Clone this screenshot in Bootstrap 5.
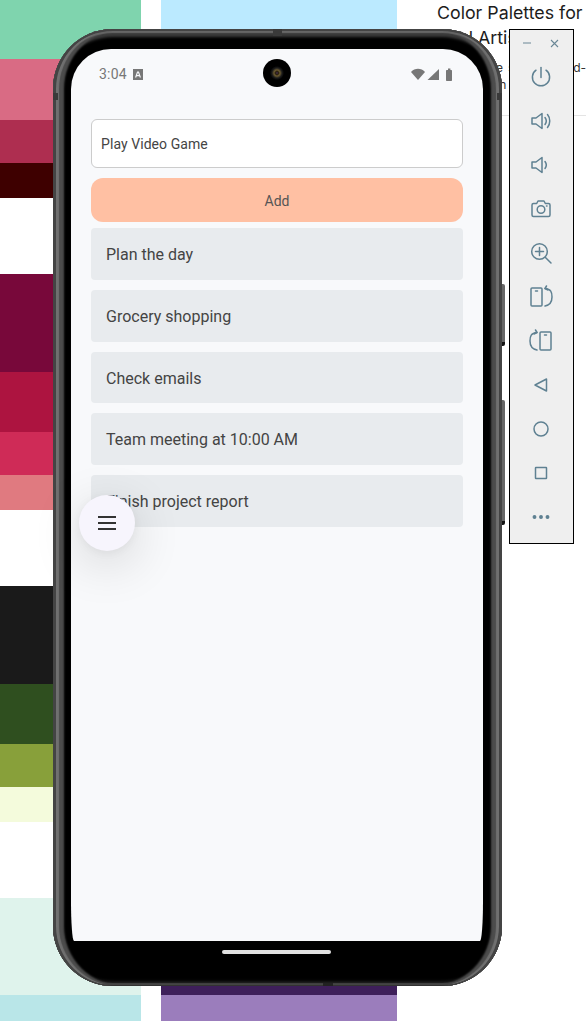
<!DOCTYPE html>
<html lang="en">
<head>
    <meta charset="UTF-8" />
    <meta name="viewport" content="width=device-width, initial-scale=1.0" />
    <title>Emulator - Todo list</title>
    <link href="https://cdn.jsdelivr.net/npm/bootstrap@5.3.3/dist/css/bootstrap.min.css" rel="stylesheet" />
    <style>
        body {
            width: 586px;
            height: 1021px;
            overflow: hidden;
            background-color: #fff;
            font-family: 'Roboto', sans-serif;
            position: relative;
        }

        /* page behind the emulator */
        .backdrop {
            height: 1021px;
        }

        .swatch-col-a {
            width: 141px;
            margin-right: 20px;
        }

        .swatch-col-b {
            width: 236px;
            margin-right: 40px;
        }

        .sw {
            height: var(--h);
            background-color: var(--c);
        }

        .article-col {
            width: 149px;
            font-family: 'Inter', sans-serif;
            color: #1c1c1c;
            overflow: hidden;
        }

        .article-title {
            font-size: 17.8px;
            line-height: 25px;
            font-weight: 400;
            white-space: nowrap;
            margin: 0;
        }

        .article-text {
            font-size: 12px;
            line-height: 17px;
            word-spacing: 2px;
            white-space: nowrap;
            margin: 9px 0 0 0;
            color: #333;
        }

        .article-rule {
            border-top: 1px solid #e4e4e4;
            margin-top: 22px;
        }

        /* phone frame */
        .phone-shell {
            position: absolute;
            left: 53px;
            top: 29px;
            width: 449px;
            height: 957px;
            padding: 20px 19px 0 18px;
            background-color: #000;
            border-radius: 60px;
            box-shadow:
                inset 3px 0 0 #444, inset -3px 0 0 #444, inset 0 2px 0 #444, inset 0 -1px 0 #333,
                inset 6px 0 1px #707070, inset -6px 0 1px #707070, inset 0 4px 1px #666, inset 0 -3px 1px #444,
                inset 11px 0 2px #4c4c4c, inset -11px 0 2px #4c4c4c, inset 0 8px 3px #3c3c3c, inset 0 -5px 3px #1c1c1c;
        }

        .frame-tick {
            position: absolute;
            background-color: #3a3a3a;
        }

        .tick-top {
            left: 220px;
            top: 0;
            width: 9px;
            height: 7px;
        }

        .tick-bottom {
            left: 270px;
            bottom: 0;
            width: 10px;
            height: 3px;
            background-color: #222;
        }

        .tick-left {
            left: 0;
            top: 64px;
            width: 5px;
            height: 7px;
        }

        .tick-right {
            right: 0;
            top: 64px;
            width: 5px;
            height: 7px;
        }

        .side-key {
            position: absolute;
            left: 449px;
            width: 3px;
            background-color: #666;
            border-bottom: 4px solid #111;
            border-radius: 0 2px 2px 0;
        }

        .key-power {
            top: 255px;
            height: 62px;
        }

        .key-volume {
            top: 371px;
            height: 125px;
        }

        .screen {
            position: relative;
            height: 892px;
            background-color: #f8f9fb;
            border-radius: 40px 40px 3px 3px / 40px 40px 40px 40px;
            color: #444;
        }

        .status-row {
            height: 70px;
            padding: 15px 29px 0 28px;
            color: #777;
            font-size: 14px;
        }

        .status-time {
            line-height: 20px;
            letter-spacing: .2px;
        }

        .badge-a {
            width: 10px;
            height: 11px;
            margin-left: 6px;
            fill: #777;
        }

        .camera-hole {
            position: absolute;
            left: 192px;
            top: 10px;
            width: 28px;
            height: 28px;
            border-radius: 50%;
            background: radial-gradient(circle at 50% 50%, #4a2f55 0, #2a2010 1.5px, #6b5a30 3px, #1c1c1c 5px, #000 7px);
        }

        .app-body {
            padding: 0 20px;
        }

        .task-input.form-control {
            height: 49px;
            font-size: 14px;
            letter-spacing: .07px;
            color: #444;
            padding: 0 9px;
            border-color: #ccc;
            border-radius: 6px;
            background-color: #fff;
        }

        .add-btn.btn {
            height: 44px;
            margin-top: 10px;
            width: 100%;
            padding-top: 8px;
            padding-bottom: 6px;
            font-size: 14px;
            color: #555;
            background-color: #ffc0a3;
            border: none;
            border-radius: 12px;
        }

        .task-list {
            margin-top: 6px;
            gap: 10px;
        }

        .task-row {
            height: 51.8px;
            line-height: 53.8px;
            padding-left: 15px;
            font-size: 16px;
            color: #444;
            background-color: #e8ebee;
            border-radius: 4px;
        }

        .fab {
            position: absolute;
            left: 8px;
            top: 446px;
            width: 56px;
            height: 56px;
            border-radius: 50%;
            background-color: #f7f5fd;
            box-shadow: 0 12px 50px rgba(0, 0, 0, .16), 0 2px 10px rgba(0, 0, 0, .05);
        }

        .home-strip {
            height: 45px;
            padding-top: 9px;
        }

        .home-bar {
            width: 109px;
            height: 4px;
            margin-left: 151px;
            background-color: #e2e2e2;
            border-radius: 2px;
        }

        /* emulator side toolbar */
        .tool-panel {
            position: absolute;
            left: 509px;
            top: 29px;
            width: 65px;
            height: 515px;
            background-color: #efefef;
            border: 1px solid #000;
        }

        .tool-head {
            height: 26px;
            padding: 0 14px 0 13px;
        }

        .tool-stack {
            gap: 16px;
            padding-top: 7px;
            padding-right: 1px;
        }

        .tool-icon {
            width: 28px;
            height: 28px;
            fill: none;
            stroke: #5f8192;
            stroke-width: 1.5;
            stroke-linecap: round;
            stroke-linejoin: round;
        }
    </style>
</head>
<body>

<div class="backdrop d-flex">
    <div class="swatch-col-a d-flex flex-column">
        <div class="sw" style="--h:59px;--c:#7fd4ae"></div>
        <div class="sw" style="--h:61px;--c:#d96b84"></div>
        <div class="sw" style="--h:43px;--c:#ae2e50"></div>
        <div class="sw" style="--h:35px;--c:#3e0000"></div>
        <div class="sw" style="--h:76px;--c:#fff"></div>
        <div class="sw" style="--h:98px;--c:#78083a"></div>
        <div class="sw" style="--h:60px;--c:#ad1440"></div>
        <div class="sw" style="--h:43px;--c:#cf2b57"></div>
        <div class="sw" style="--h:35px;--c:#e07a80"></div>
        <div class="sw" style="--h:76px;--c:#fff"></div>
        <div class="sw" style="--h:98px;--c:#1a1a1a"></div>
        <div class="sw" style="--h:60px;--c:#2f4f1f"></div>
        <div class="sw" style="--h:43px;--c:#88a03a"></div>
        <div class="sw" style="--h:35px;--c:#f4fbdc"></div>
        <div class="sw" style="--h:76px;--c:#fff"></div>
        <div class="sw" style="--h:97px;--c:#dff3ec"></div>
        <div class="sw" style="--h:26px;--c:#b9e6e8"></div>
    </div>
    <div class="swatch-col-b d-flex flex-column">
        <div class="sw" style="--h:100px;--c:#bbeaff"></div>
        <div class="sw" style="--h:885px;--c:#fff"></div>
        <div class="sw" style="--h:10px;--c:#3e1f5a"></div>
        <div class="sw" style="--h:26px;--c:#9b7dbc"></div>
    </div>
    <div class="article-col">
        <h1 class="article-title">Color Palettes for<br>Real Artists</h1>
        <p class="article-text">Explore the sweet brand-<br>swatches in</p>
        <div class="article-rule"></div>
    </div>
</div>

<div class="phone-shell">
    <div class="frame-tick tick-top"></div>
    <div class="frame-tick tick-bottom"></div>
    <div class="frame-tick tick-left"></div>
    <div class="frame-tick tick-right"></div>
    <div class="side-key key-power"></div>
    <div class="side-key key-volume"></div>

    <div class="screen">
        <div class="status-row d-flex align-items-start justify-content-between">
            <div class="d-flex align-items-center">
                <span class="status-time">3:04</span>
                <svg class="badge-a" viewBox="0 0 10 11"><path fill-rule="evenodd" d="M0 0h10v11H0zM4.100 2.500 2 8.500h1.300l.4-1.300h2.600l.4 1.300H8L5.900 2.500zM4.100 6 5 3.600 5.900 6z"/></svg>
            </div>
            <svg width="43" height="13" viewBox="0 0 43 13" class="mt-1" fill="#777">
                <path d="M0 4C3.800-.2 10.200-.2 14 4L7 12z"/>
                <path d="M16.500 12 28 1v11z"/>
                <path d="M35 2.700c0-.4.300-.7.700-.7h1.300V.4h2.400V2h.9c.4 0 .7.300.7.700v9.600c0 .4-.3.700-.7.700h-4.600c-.4 0-.7-.3-.7-.7z"/>
            </svg>
        </div>
        <div class="camera-hole"></div>

        <div class="app-body">
            <input class="task-input form-control" type="text" value="Play Video Game" />
            <button type="button" class="add-btn btn">Add</button>
            <div class="task-list d-flex flex-column">
                <div class="task-row">Plan the day</div>
                <div class="task-row">Grocery shopping</div>
                <div class="task-row">Check emails</div>
                <div class="task-row">Team meeting at 10:00 AM</div>
                <div class="task-row">Finish project report</div>
            </div>
        </div>

        <div class="fab d-flex align-items-center justify-content-center">
            <svg width="18" height="14" viewBox="0 0 18 14" stroke="#333" stroke-width="2"><path d="M0 1h18M0 7h18M0 13h18"/></svg>
        </div>
    </div>

    <div class="home-strip">
        <div class="home-bar"></div>
    </div>
</div>

<div class="tool-panel">
    <div class="tool-head d-flex align-items-center justify-content-between">
        <svg width="8" height="8" viewBox="0 0 8 8" stroke="#6a8796" stroke-width="1"><path d="M0 4h8"/></svg>
        <svg width="9" height="9" viewBox="0 0 9 9" stroke="#6a8796" stroke-width="1.100"><path d="M1 1l7 7M8 1 1 8"/></svg>
    </div>
    <div class="tool-stack d-flex flex-column align-items-center">
        <svg class="tool-icon" viewBox="0 0 28 28"><path d="M14 4.500v10"/><path d="M9 7.200a8.600 8.600 0 1 0 10 0"/></svg>
        <svg class="tool-icon" viewBox="0 0 28 28"><path d="M5 11h4l6-4.500v15L9 17H5z"/><path d="M18 10.500c1.500 2 1.500 5 0 7"/><path d="M20.500 7.500c3 3.500 3 9.500 0 13"/></svg>
        <svg class="tool-icon" viewBox="0 0 28 28"><path d="M5 11h4l6-4.500v15L9 17H5z"/><path d="M18 10.500c1.500 2 1.500 5 0 7"/></svg>
        <svg class="tool-icon" viewBox="0 0 28 28"><path d="M6.500 8.500h3.200l1.300-2.500h6l1.300 2.500h3.200c1 0 1.500.6 1.500 1.500v10c0 1-.6 1.500-1.500 1.500h-15C5.500 21.500 5 21 5 20V10c0-.9.5-1.500 1.500-1.500z"/><circle cx="14" cy="14.500" r="3.800"/><path d="M19.500 11h.5"/></svg>
        <svg class="tool-icon" viewBox="0 0 28 28"><circle cx="12.500" cy="12.500" r="7.800"/><path d="M18.200 18.200 24 24"/><path d="M12.500 8.500v8M8.500 12.500h8"/></svg>
        <svg class="tool-icon" viewBox="0 0 28 28"><rect x="4" y="5" width="11" height="18" rx="1"/><path d="M8.500 8h2"/><path d="M18 5.500c6 .5 7 3.500 7 8.500 0 5-2 8-7 9"/><path d="M19.500 3 18 5.500l3 1.500"/></svg>
        <svg class="tool-icon" viewBox="0 0 28 28"><rect x="13" y="5" width="11" height="18" rx="1"/><path d="M17.500 8h2"/><path d="M10 5.500C4 6 3 9 3 14c0 5 2 8 7 9"/><path d="M8.500 3 10 5.500 7 7"/></svg>
        <svg class="tool-icon" viewBox="0 0 28 28"><path d="M19.500 8v12L8 14z"/></svg>
        <svg class="tool-icon" viewBox="0 0 28 28"><circle cx="14" cy="14" r="7"/></svg>
        <svg class="tool-icon" viewBox="0 0 28 28"><rect x="8.500" y="8.500" width="11" height="11" rx=".5"/></svg>
        <svg class="tool-icon" viewBox="0 0 28 28"><circle cx="7.500" cy="14" r="1.200" fill="#5f8192"/><circle cx="14" cy="14" r="1.200" fill="#5f8192"/><circle cx="20.500" cy="14" r="1.200" fill="#5f8192"/></svg>
    </div>
</div>

<script src="https://cdn.jsdelivr.net/npm/bootstrap@5.3.3/dist/js/bootstrap.bundle.min.js"></script>
</body>
</html>
